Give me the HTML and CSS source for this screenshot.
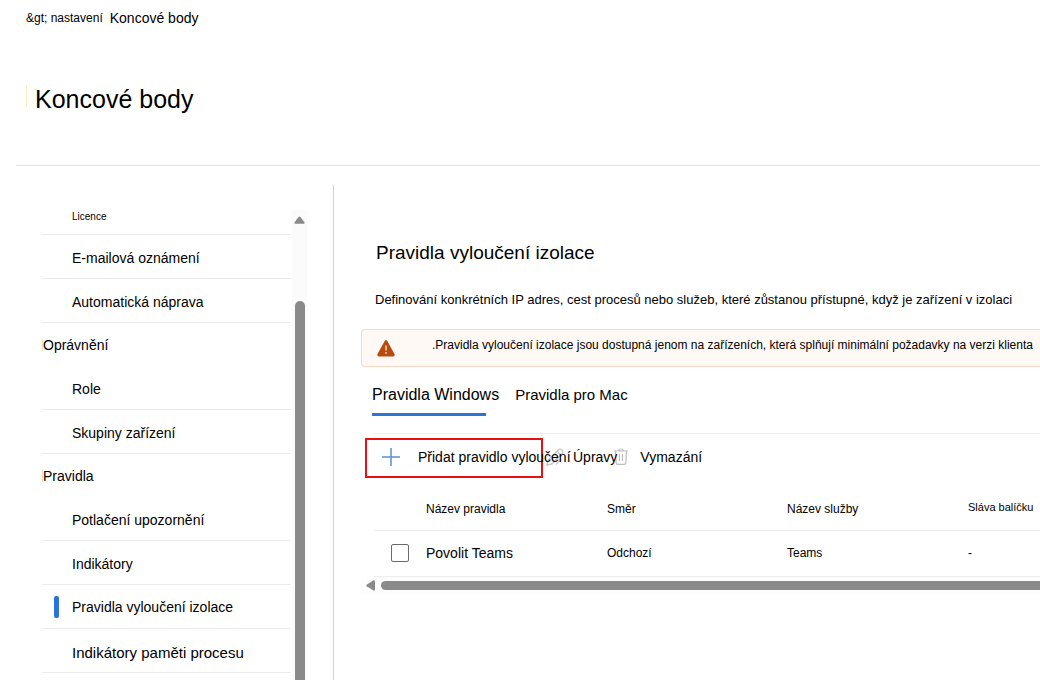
FILE: index.html
```html
<!DOCTYPE html>
<html lang="cs">
<head>
<meta charset="utf-8">
<title>Koncové body</title>
<link rel="stylesheet" href="styles.css">
</head>
<body>
<header class="page-header">
  <nav class="breadcrumb" aria-label="Drobečková navigace">
    <a class="crumb crumb-small" href="#">&amp;gt; nastavení</a>
    <a class="crumb" href="#">Koncové body</a>
  </nav>
  <h1 class="page-title">Koncové body</h1>
</header>
<div class="layout">
  <div class="sidebar">
    <nav class="side-nav" aria-label="Nastavení">
      <a class="nav-item nav-first" href="#">Licence</a>
      <a class="nav-item" href="#">E-mailová oznámení</a>
      <a class="nav-item" href="#">Automatická náprava</a>
      <h2 class="nav-group"><span class="group-label">Oprávnění</span></h2>
      <a class="nav-item" href="#">Role</a>
      <a class="nav-item" href="#">Skupiny zařízení</a>
      <h2 class="nav-group"><span class="group-label">Pravidla</span></h2>
      <a class="nav-item" href="#">Potlačení upozornění</a>
      <a class="nav-item" href="#">Indikátory</a>
      <a class="nav-item nav-active" href="#" aria-current="page">Pravidla vyloučení izolace</a>
      <a class="nav-item nav-large" href="#">Indikátory paměti procesu</a>
    </nav>
    <div class="v-scroll" aria-hidden="true">
      <svg class="v-arrow" viewBox="0 0 12 8"><path d="M5 .6Q6-.4 7 .6L11.400 6.400Q12 8 10.500 8H1.500Q0 8 .6 6.400Z" fill="#8a8a8a"/></svg>
      <div class="v-thumb"></div>
    </div>
  </div>
  <main class="content">
    <h2 class="section-title">Pravidla vyloučení izolace</h2>
    <p class="description">Definování konkrétních IP adres, cest procesů nebo služeb, které zůstanou přístupné, když je zařízení v izolaci</p>
    <div class="banner" role="status">
      <svg class="warn-icon" viewBox="0 0 18 17" aria-hidden="true"><path d="M7.700 1Q9-.8 10.300 1L17.600 14.200Q18.200 16.500 16 16.500H2Q-.2 16.500.4 14.200Z" fill="#b84a0c"/><path d="M9 5.500V10.500M9 12V13.700" stroke="#fde3d3" stroke-width="1.300"/></svg>
      <span class="banner-text">.Pravidla vyloučení izolace jsou dostupná jenom na zařízeních, která splňují minimální požadavky na verzi klienta</span>
    </div>
    <div class="tabs" role="tablist">
      <button class="tab tab-active" role="tab" aria-selected="true">Pravidla Windows</button>
      <button class="tab" role="tab" aria-selected="false">Pravidla pro Mac</button>
    </div>
    <div class="toolbar">
      <button class="tool tool-add">
        <svg class="plus-icon" viewBox="0 0 18 18" aria-hidden="true"><path d="M9 0V18M0 9H18" stroke="#5b8fce" stroke-width="1.500"/></svg>
        <span class="tool-label">Přidat pravidlo vyloučení</span>
      </button>
      <button class="tool tool-edit">
        <svg class="pencil-icon" viewBox="0 0 18 18" aria-hidden="true"><path d="M1 17L2.200 12L12.500 1.700Q14.200.5 15.900 2.100Q17.500 3.800 16.300 5.500L6 15.800ZM11 3.200L14.800 7M9.500 9.500L13.500 13L10 16.500" fill="none" stroke="#c4c4c4" stroke-width="1.300"/></svg>
        <span class="tool-label">Úpravy</span>
      </button>
      <button class="tool tool-delete">
        <svg class="trash-icon" viewBox="0 0 14 17" aria-hidden="true"><path d="M0 3H14M4.700 3Q4.700 1 7 1Q9.300 1 9.300 3M1.500 3L2.200 15Q2.300 16.300 3.500 16.300H10.500Q11.700 16.300 11.800 15L12.500 3M5.500 6V13M8.500 6V13" fill="none" stroke="#bdbdbd" stroke-width="1.200"/></svg>
        <span class="tool-label">Vymazání</span>
      </button>
    </div>
    <table class="rules">
      <colgroup><col class="col-check"><col class="col-name"><col class="col-direction"><col class="col-service"><col></colgroup>
      <thead>
        <tr><td></td><th scope="col">Název pravidla</th><th scope="col">Směr</th><th scope="col">Název služby</th><th class="head-small" scope="col">Sláva balíčku</th></tr>
      </thead>
      <tbody>
        <tr><td class="check-cell"><input class="check" type="checkbox" id="rule-teams"></td><td class="name-cell"><label for="rule-teams">Povolit Teams</label></td><td>Odchozí</td><td>Teams</td><td>-</td></tr>
      </tbody>
    </table>
    <div class="h-scroll" aria-hidden="true">
      <svg class="h-arrow" viewBox="0 0 9 11"><path d="M7.500.3Q9 0 9 1.500V9.500Q9 11 7.500 10.600L.6 6.300Q-.2 5.500.6 4.700Z" fill="#8a8a8a"/></svg>
      <div class="h-thumb"></div>
    </div>
  </main>
</div>
</body>
</html>
```
FILE: styles.css
```css
* { box-sizing: border-box; }
body {
  margin: 0;
  min-height: 100vh;
  display: flex;
  flex-direction: column;
  background: #fff;
  color: #000;
  font-family: "Liberation Sans", Arial, sans-serif;
  font-size: 14px;
  line-height: 20px;
}
a { color: inherit; text-decoration: none; }
h1, h2, p { margin: 0; font-weight: 400; }
button { border: 0; background: none; color: inherit; font: inherit; padding: 0; }

.page-header {
  margin-left: 16px;
  padding: 8px 0 0 10px;
  border-bottom: 1px solid #e3e3e3;
}
.breadcrumb { display: flex; gap: 7px; }
.crumb-small { font-size: 12px; }
.page-title {
  margin: 57px 0 58px;
  padding-left: 8px;
  border-left: 1px solid #fff0c0;
  font-size: 25px;
  line-height: 22px;
  padding-top: 3px;
  height: 22px;
}

.layout { flex: 1; display: flex; padding-top: 19px; }
.sidebar {
  width: 334px;
  flex: none;
  display: flex;
  padding: 25px 26px 0 42px;
  border-right: 1px solid #d2d2d2;
}
.side-nav { flex: 1; }
.nav-item {
  display: flex;
  align-items: center;
  height: 44px;
  padding: 2px 0 0 30px;
  border-bottom: 1px solid #ececec;
}
.nav-first { height: 25px; padding: 0 0 10px 30px; font-size: 10px; }
.nav-large { font-size: 15px; padding-top: 5px; }
.nav-active { padding: 0 0 0 12px; gap: 13px; }
.nav-active::before {
  content: "";
  width: 5px;
  height: 22px;
  border-radius: 2px;
  background: #2a74d8;
}
.nav-group { display: flex; align-items: center; height: 43px; font-size: 14px; }
.group-label { border-left: 1px solid #fbd9ab; line-height: 12px; }
.v-scroll {
  width: 15px;
  margin-left: 1px;
  display: flex;
  flex-direction: column;
  align-items: center;
  background: #fbfbfb;
}
.v-arrow { width: 11px; height: 8px; margin-top: 6px; flex: none; }
.v-thumb { flex: 1; width: 10px; margin-top: 77px; border-radius: 5px 5px 0 0; background: #8a8a8a; }

.content { flex: 1; min-width: 0; padding-left: 27px; overflow: hidden; }
.section-title {
  margin: 56px 0 0 15px;
  font-size: 19px;
  line-height: 24px;
}
.description { margin: 25px 0 0 14px; font-size: 13px; line-height: 20px; white-space: nowrap; }
.banner {
  display: flex;
  align-items: center;
  height: 38px;
  margin-top: 19px;
  padding-left: 15px;
  border: 1px solid #fbd9c8;
  border-right: 0;
  border-radius: 4px 0 0 4px;
  background: #fff9f5;
}
.warn-icon { width: 18px; height: 17px; flex: none; }
.banner-text { margin-left: 37px; padding-bottom: 6px; font-size: 12px; white-space: nowrap; }
.tabs {
  display: flex;
  gap: 16px;
  height: 66px;
  margin-left: 11px;
  padding-top: 18px;
  align-items: flex-start;
}
.tab { position: relative; height: 31px; padding-bottom: 11px; font-size: 15px; }
.tab-active { font-size: 16px; }
.tab-active::after {
  content: "";
  position: absolute;
  left: 0;
  right: 13px;
  bottom: 0;
  height: 3px;
  background: #2a74d8;
}
.toolbar {
  display: flex;
  align-items: center;
  height: 50px;
  margin-left: 4px;
  background: linear-gradient(#f0f0f0, #f0f0f0) 9px 0 / 100% 1px no-repeat;
}
.tool { display: flex; align-items: center; height: 40px; padding-bottom: 3px; white-space: nowrap; }
.tool-add {
  width: 178px;
  flex: none;
  border: 2px solid #e81010;
  padding-left: 15px;
  gap: 18px;
}
.plus-icon { width: 18px; height: 18px; flex: none; }
.tool-edit { margin-left: 3px; gap: 9px; }
.pencil-icon { width: 18px; height: 18px; flex: none; }
.trash-icon { width: 14px; height: 17px; margin-left: -3px; }
.tool-delete { gap: 12px; }
.tool-label { position: relative; z-index: 1; }

.rules {
  width: calc(100% - 13px);
  margin-left: 13px;
  table-layout: fixed;
  border-collapse: collapse;
  font-size: 12px;
}
.col-check { width: 52px; }
.col-name, .col-service { width: 181px; }
.col-direction { width: 180px; }
.rules th, .rules td {
  padding: 0;
  text-align: left;
  font-weight: 400;
  border-bottom: 1px solid #ececec;
  white-space: nowrap;
}
.rules thead tr { height: 47px; }
.rules thead th { padding-top: 5px; }
.rules tbody tr { height: 46px; }
.rules thead .head-small { padding-top: 1px; font-size: 11px; }
.rules .name-cell { font-size: 14px; }
.rules .check-cell { padding-left: 17px; }
.check {
  appearance: none;
  display: block;
  width: 18px;
  height: 18px;
  margin: 0;
  border: 1px solid #6b6b6b;
  border-radius: 2px;
  background: #fff;
}
.h-scroll { display: flex; align-items: center; gap: 6px; height: 17px; padding-left: 5px; background: #fdfdfd; }
.h-arrow { width: 9px; height: 11px; flex: none; }
.h-thumb { flex: 1; height: 9px; border-radius: 5px 0 0 5px; background: #8a8a8a; }
```
